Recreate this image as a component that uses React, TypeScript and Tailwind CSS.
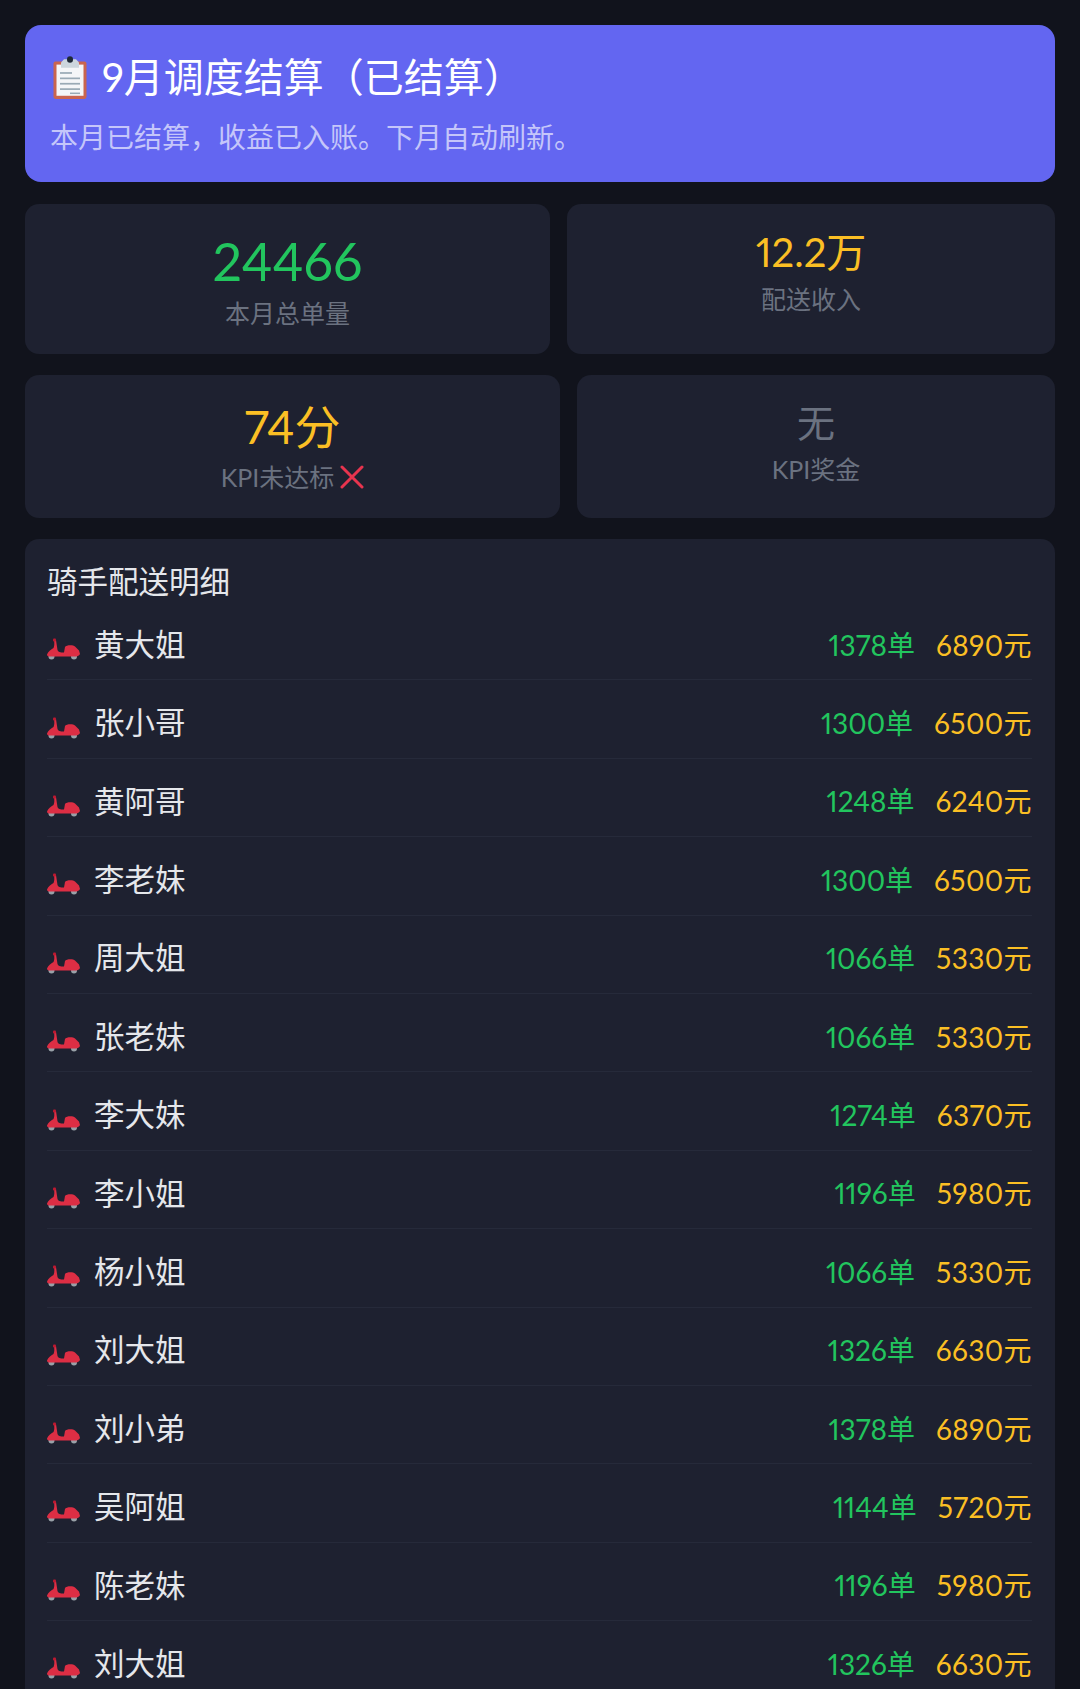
import React from 'react';

const riders = [
  ['黄大姐', 1378, 6890],
  ['张小哥', 1300, 6500],
  ['黄阿哥', 1248, 6240],
  ['李老妹', 1300, 6500],
  ['周大姐', 1066, 5330],
  ['张老妹', 1066, 5330],
  ['李大妹', 1274, 6370],
  ['李小姐', 1196, 5980],
  ['杨小姐', 1066, 5330],
  ['刘大姐', 1326, 6630],
  ['刘小弟', 1378, 6890],
  ['吴阿姐', 1144, 5720],
  ['陈老妹', 1196, 5980],
  ['刘大姐', 1326, 6630],
] as const;

const ClipboardIcon = () => (
  <svg width="34" height="43" viewBox="0 0 34 40" preserveAspectRatio="none" className="ml-[3px] shrink-0">
    <rect x="0.5" y="5" width="33" height="35" rx="2" fill="#c9654f" />
    <rect x="3.5" y="8" width="27" height="29" fill="#f4f6f8" />
    <path d="M8 6 L11 3 H23 L26 6 V11 H8 Z" fill="#ccd6dd" />
    <circle cx="17" cy="3.2" r="3" fill="#1f2a37" />
    <rect x="7" y="15" width="12" height="1.6" fill="#99aab5" />
    <rect x="7" y="20" width="20" height="1.6" fill="#99aab5" />
    <rect x="7" y="25" width="20" height="1.6" fill="#99aab5" />
    <rect x="7" y="30" width="20" height="1.6" fill="#99aab5" />
    <rect x="17" y="34" width="10" height="1.4" fill="#99aab5" />
  </svg>
);

const ScooterIcon = () => (
  <svg width="33" height="22" viewBox="0 0 33 22" className="mt-[9px] shrink-0">
    <circle cx="4.5" cy="18.5" r="3" fill="#99a1a8" />
    <circle cx="27" cy="18.5" r="3" fill="#99a1a8" />
    <path
      d="M7 2 L9 2 L10.5 12 C11 14 13 14.5 17 14.5 L18 9 C19 7 26 6.5 28 8.5 L32 12.5 L33 16 C32 18 30 18.5 28 18.5 L3 18.5 C1 18.5 0 18 0 16.5 C1 13.5 4 11.5 6.5 10 C7.5 8 7.5 5 7 2 Z"
      fill="#dd2e44"
    />
    <rect x="6" y="0.5" width="3" height="3" rx="1" fill="#be1931" />
  </svg>
);

const CrossIcon = () => (
  <svg width="24" height="24" viewBox="0 0 24 24" className="shrink-0">
    <path d="M2 2 L22 22 M22 2 L2 22" stroke="#e8344e" strokeWidth="3" strokeLinecap="round" />
  </svg>
);

export default function App() {
  return (
    <div className="h-[1689px] overflow-hidden bg-[#11131c] px-[25px] pt-[25px] font-['Lato','Noto_Sans_CJK_SC',sans-serif] proportional-nums">
      {/* Header */}
      <div className="h-[157px] rounded-[16px] bg-[#6366f1] px-[25px] pt-[27px]">
        <div className="flex h-[50px] items-center gap-[15px] text-[40px] leading-[50px] text-white">
          <ClipboardIcon />
          <span>9月调度结算（已结算）</span>
        </div>
        <div className="mt-[17px] text-[28px] leading-[36px] text-[#c5c6fa]">本月已结算，收益已入账。下月自动刷新。</div>
      </div>

      {/* Stats */}
      <div className="mt-[22px] flex gap-[17px]">
        <div className="flex h-[150px] w-[525px] flex-col items-center rounded-[14px] bg-[#1e2130] pt-[27px]">
          <div className="text-[52px] leading-[60px] text-[#22c55e]">24466</div>
          <div className="mt-[5px] text-[25px] leading-[34px] text-[#6b7280]">本月总单量</div>
        </div>
        <div className="flex h-[150px] flex-1 flex-col items-center rounded-[14px] bg-[#1e2130] pt-[25px]">
          <div className="text-[40px] leading-[46px] text-[#fbbf24]">12.2万</div>
          <div className="mt-[7px] text-[25px] leading-[34px] text-[#6b7280]">配送收入</div>
        </div>
      </div>
      <div className="mt-[21px] flex gap-[17px]">
        <div className="flex h-[143px] w-[535px] flex-col items-center rounded-[14px] bg-[#1e2130] pt-[25px]">
          <div className="text-[46px] leading-[54px] text-[#fbbf24]">74分</div>
          <div className="mt-[6px] flex items-center gap-[6px] text-[25px] leading-[34px] text-[#6b7280]">
            KPI未达标
            <CrossIcon />
          </div>
        </div>
        <div className="flex h-[143px] flex-1 flex-col items-center rounded-[14px] bg-[#1e2130] pt-[22px]">
          <div className="text-[38px] leading-[50px] text-[#6b7280]">无</div>
          <div className="mt-[5px] text-[25px] leading-[34px] text-[#6b7280]">KPI奖金</div>
        </div>
      </div>

      {/* Rider list */}
      <div className="mt-[21px] rounded-[14px] bg-[#1e2130] pr-[23px] pl-[22px] pt-[21px] pb-[22px]">
        <div className="text-[30.5px] leading-[42px] text-[#e5e7eb]">骑手配送明细</div>
        {riders.map(([name, orders, income], i) => (
          <div
            key={i}
            className="flex h-[78.4px] items-center border-b border-[#262a3a] pt-[8px] text-[28px] first:h-[69px]"
          >
            <ScooterIcon />
            <span className="ml-[14px] text-[30.5px] text-[#e5e7eb]">{name}</span>
            <span className="ml-auto text-[#22c55e]">{orders}单</span>
            <span className="ml-[21px] tracking-[0.4px] text-[#fbbf24]">{income}元</span>
          </div>
        ))}
      </div>
    </div>
  );
}
